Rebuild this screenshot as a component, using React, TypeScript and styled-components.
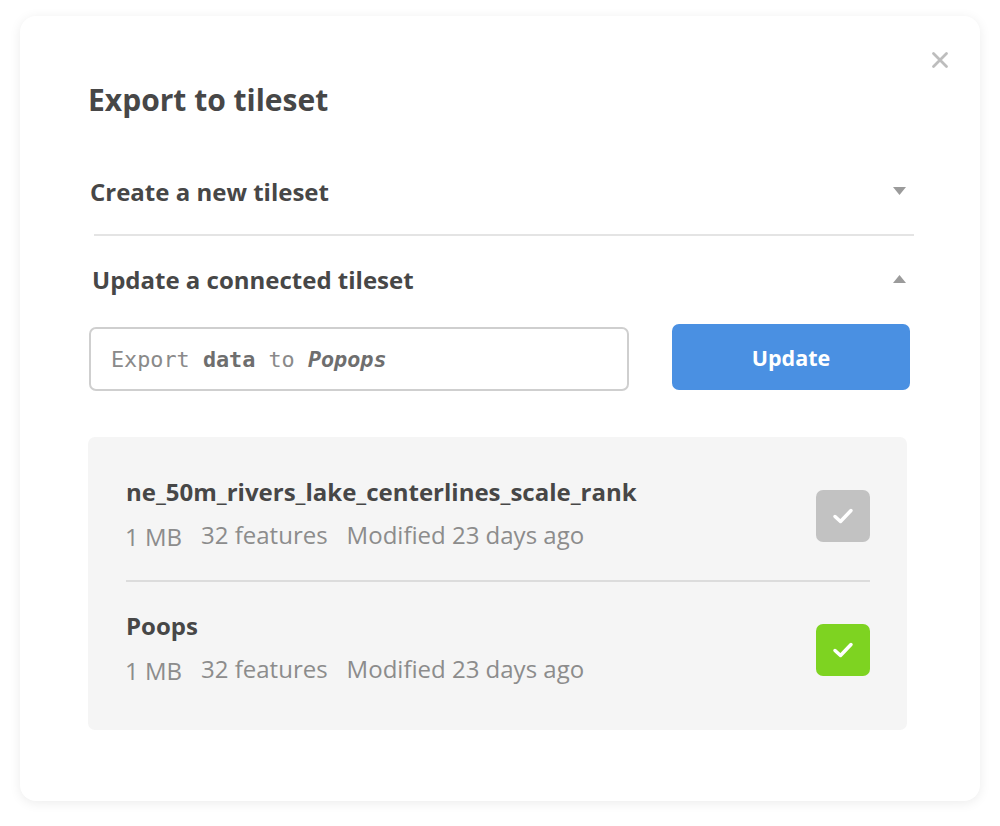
import styled, { createGlobalStyle } from "styled-components";

const textColor = "#474747";
const mutedColor = "#8c8c8c";

const GlobalStyle = createGlobalStyle`
  html, body {
    margin: 0;
    padding: 0;
    background: #ffffff;
    font-family: "Open Sans", "Noto Sans", sans-serif;
  }
`;

const Page = styled.div`
  padding: 16px 20px 24px 20px;
`;

const Card = styled.div`
  position: relative;
  height: 785px;
  box-sizing: border-box;
  background: #fff;
  border-radius: 16px;
  box-shadow: 0 2px 12px rgba(0, 0, 0, 0.08);
  padding: 64px 70px 0 69px;
  display: flex;
  flex-direction: column;
`;

const CloseButton = styled.button`
  position: absolute;
  top: 32px;
  right: 28px;
  width: 24px;
  height: 24px;
  padding: 0;
  border: none;
  background: none;
  display: flex;
  align-items: center;
  justify-content: center;
`;

const Title = styled.h1`
  margin: 0 0 0 -1px;
  font-size: 30px;
  font-weight: 700;
  color: ${textColor};
  line-height: 40px;
`;

const SectionHeader = styled.div<{ $divider?: boolean }>`
  display: flex;
  align-items: center;
  justify-content: space-between;
  margin: 0 -4px 0 5px;
  padding-right: 8px;
  height: 86px;
  border-bottom: ${(p) => (p.$divider ? "2px solid #e4e4e4" : "none")};
`;

const SectionTitle = styled.span<{ $shift: number }>`
  margin-left: ${(p) => p.$shift}px;
  font-size: 24px;
  font-weight: 700;
  color: ${textColor};
`;

const FormRow = styled.div`
  display: flex;
  align-items: flex-start;
  gap: 43px;
  margin-top: 2px;
`;

const CommandInput = styled.div`
  flex: 0 0 540px;
  height: 64px;
  margin-top: 3px;
  box-sizing: border-box;
  border: 2px solid #cfcfcf;
  border-radius: 7px;
  display: flex;
  align-items: center;
  padding-left: 20px;
  font-family: "DejaVu Sans Mono", "Liberation Mono", monospace;
  font-size: 21.8px;
  color: #8a8a8a;
  white-space: pre;
  b {
    color: #6e6e6e;
  }
  em {
    font-weight: 700;
    color: #6e6e6e;
  }
`;

const PrimaryButton = styled.button`
  width: 238px;
  height: 66px;
  border: none;
  border-radius: 7px;
  background: #4a90e2;
  color: #fff;
  font-family: "Open Sans", "Noto Sans", sans-serif;
  font-size: 21.5px;
  font-weight: 700;
  padding-right: 6px;
`;

const TilesetList = styled.div`
  margin-top: 46px;
  width: 819px;
  margin-left: -1px;
  background: #f5f5f5;
  border-radius: 7px;
  padding: 39px 37px 45px 38px;
  box-sizing: border-box;
`;

const TilesetRow = styled.div<{ $divider?: boolean }>`
  display: flex;
  align-items: center;
  justify-content: space-between;
  padding: ${(p) => (p.$divider ? "0 0 29px" : "28px 0 0")};
  border-bottom: ${(p) => (p.$divider ? "2px solid #dcdcdc" : "none")};
`;

const TilesetInfo = styled.div`
  display: flex;
  flex-direction: column;
  gap: 11px;
`;

const TilesetName = styled.div`
  font-size: 24px;
  font-weight: 700;
  color: ${textColor};
  line-height: 32px;
`;

const Meta = styled.div`
  display: flex;
  gap: 19px;
  font-size: 24px;
  color: ${mutedColor};
  line-height: 32px;
`;

const MetaSize = styled.span`
  position: relative;
  top: 2px;
  margin-left: -1px;
`;

const CheckBox = styled.div<{ $checked: boolean }>`
  width: 54px;
  height: 52px;
  margin-top: 4px;
  border-radius: 7px;
  background: ${(p) => (p.$checked ? "#7ed321" : "#c2c2c2")};
  display: flex;
  align-items: center;
  justify-content: center;
`;

function Caret({ up }: { up?: boolean }) {
  return (
    <svg width="13" height="8" viewBox="0 0 13 8">
      <path d={up ? "M0 8 L6.5 0 L13 8 Z" : "M0 0 L13 0 L6.5 8 Z"} fill="#9b9b9b" />
    </svg>
  );
}

function Check() {
  return (
    <svg width="22" height="18" viewBox="0 0 22 18">
      <path
        d="M3 9.5 L8.5 14.5 L19 3.5"
        fill="none"
        stroke="#fff"
        strokeWidth="3.5"
        strokeLinecap="round"
        strokeLinejoin="round"
      />
    </svg>
  );
}

const tilesets = [
  { name: "ne_50m_rivers_lake_centerlines_scale_rank", checked: false },
  { name: "Poops", checked: true },
];

export default function App() {
  return (
    <Page>
      <GlobalStyle />
      <Card>
        <CloseButton aria-label="Close">
          <svg width="18" height="18" viewBox="0 0 18 18">
            <path
              d="M2.5 2.5 L15.5 15.5 M15.5 2.5 L2.5 15.5"
              stroke="#bdbdbd"
              strokeWidth="2.8"
              strokeLinecap="round"
            />
          </svg>
        </CloseButton>
        <Title>Export to tileset</Title>
        <SectionHeader $divider style={{ marginTop: 28 }}>
          <SectionTitle $shift={-4}>Create a new tileset</SectionTitle>
          <Caret />
        </SectionHeader>
        <SectionHeader>
          <SectionTitle $shift={-2}>Update a connected tileset</SectionTitle>
          <Caret up />
        </SectionHeader>
        <FormRow>
          <CommandInput>
            Export <b>data</b> to <em>Popops</em>
          </CommandInput>
          <PrimaryButton>Update</PrimaryButton>
        </FormRow>
        <TilesetList>
          {tilesets.map((t, k) => (
            <TilesetRow key={t.name} $divider={k === 0}>
              <TilesetInfo>
                <TilesetName>{t.name}</TilesetName>
                <Meta>
                  <MetaSize>1 MB</MetaSize>
                  <span>32 features</span>
                  <span>Modified 23 days ago</span>
                </Meta>
              </TilesetInfo>
              <CheckBox $checked={t.checked}>
                <Check />
              </CheckBox>
            </TilesetRow>
          ))}
        </TilesetList>
      </Card>
    </Page>
  );
}
